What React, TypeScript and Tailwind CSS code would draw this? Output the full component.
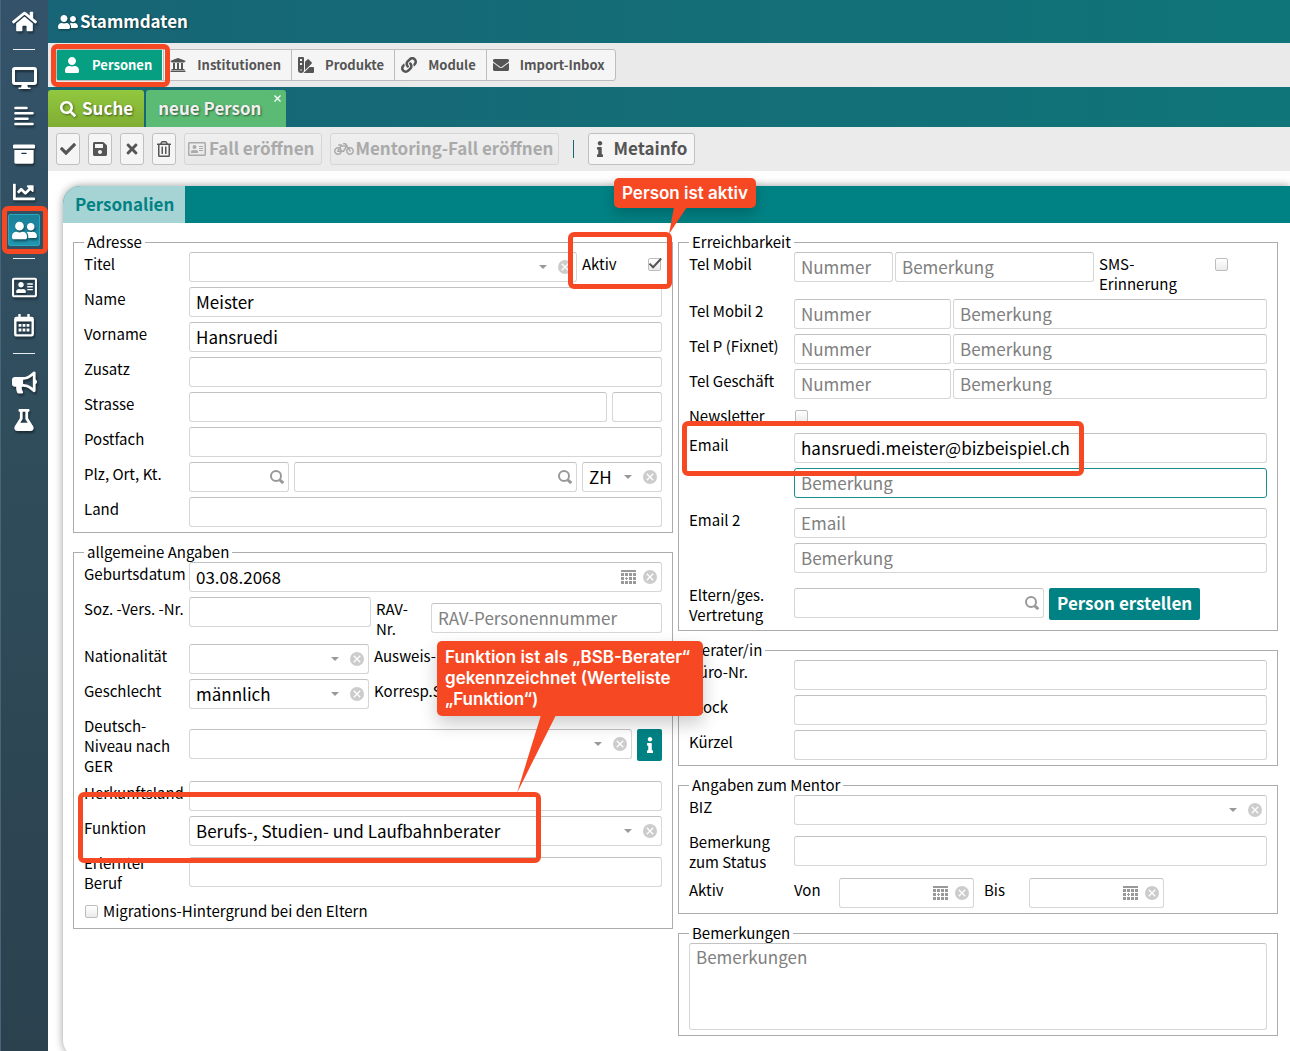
import { useId, type ReactNode } from "react";
import type { IconType } from "react-icons";
import {
  FaArchive,
  FaBicycle,
  FaBullhorn,
  FaChartLine,
  FaCheck,
  FaEnvelope,
  FaFlask,
  FaHome,
  FaInfo,
  FaLink,
  FaRegAddressCard,
  FaRegTrashAlt,
  FaSave,
  FaSearch,
  FaSwatchbook,
  FaTimes,
  FaUniversity,
  FaUser,
  FaUserFriends,
} from "react-icons/fa";

/* ---------- drawings ---------- */

function MonitorIcon() {
  return (
    <svg viewBox="0 0 25 23" className="h-[23px] w-[25px]" fill="none">
      <rect x="1.5" y="1.5" width="22" height="15" rx="1.5" stroke="currentColor" strokeWidth="3" />
      <path d="M10 17h5l1 3.5h2.5V22h-12v-1.5H9z" fill="currentColor" />
    </svg>
  );
}

function LinesIcon() {
  return (
    <svg viewBox="0 0 20 20" className="size-5" fill="none" stroke="currentColor" strokeWidth="2.6" strokeLinecap="round">
      <path d="M1.5 2h11M1.5 7.3h17M1.5 12.7h12M1.5 18h17" />
    </svg>
  );
}

function CalendarGridIcon() {
  return (
    <svg viewBox="0 0 20 23" className="h-[23px] w-5" fill="none">
      <rect x="1.3" y="4" width="17.4" height="17.4" rx="1.2" stroke="currentColor" strokeWidth="2.4" />
      <path d="M5.5 0.6v4M14.5 0.6v4" stroke="currentColor" strokeWidth="2.4" strokeLinecap="round" />
      <path d="M1 4h18v3.5H1z" fill="currentColor" />
      <path
        fill="currentColor"
        d="M4.6 10h2.8v2.8H4.6zM8.6 10h2.8v2.8H8.6zM12.6 10h2.8v2.8h-2.8zM4.6 14.6h2.8v2.8H4.6zM8.6 14.6h2.8v2.8H8.6zM12.6 14.6h2.8v2.8h-2.8z"
      />
    </svg>
  );
}

function DateIcon() {
  return (
    <svg viewBox="0 0 15 14" className="h-[14px] w-[15px]" fill="#999">
      <path d="M0 0h15v2H0zM0 3h3v3H0zM4 3h3v3H4zM8 3h3v3H8zM12 3h3v3h-3zM0 7h3v3H0zM4 8h1V7h1v1h1v1H6v1H5V9H4zM8 7h3v3H8zM12 7h3v3h-3zM0 11h3v3H0zM4 11h3v3H4zM8 11h3v3H8zM12 11h3v3h-3z" />
    </svg>
  );
}

function ClearIcon() {
  return (
    <svg viewBox="0 0 14 14" className="size-[14px]">
      <circle cx="7" cy="7" r="7" fill="#ccc" />
      <path d="M3.8 3.8l6.4 6.4M10.2 3.8l-6.4 6.4" stroke="#fff" strokeWidth="1.3" />
    </svg>
  );
}

function LensIcon() {
  return (
    <svg viewBox="0 0 14 14" className="size-[14px]" fill="none" stroke="#999">
      <circle cx="6" cy="6" r="5" strokeWidth="2" />
      <path d="M9.8 9.8l3.4 3.2" strokeWidth="3" />
    </svg>
  );
}

/* ---------- form parts ---------- */

const box =
  "h-[30px] min-w-0 rounded-[3px] border border-[#d6d6d6] border-t-[#c2c2c2] bg-white px-[6px] pb-px text-[17px] text-black outline-none placeholder:text-[#808080]";

function Field({
  label,
  value,
  placeholder,
  className = "flex-1",
  id,
  focused = false,
}: {
  label: string;
  value?: string;
  placeholder?: string;
  className?: string;
  id?: string;
  focused?: boolean;
}) {
  return (
    <input
      id={id}
      aria-label={id ? undefined : label}
      defaultValue={value}
      placeholder={placeholder}
      className={`${box} ${className} ${focused ? "border-[#1c8f8b]! border-t-[#1c8f8b]!" : ""}`}
    />
  );
}

function Clear() {
  return (
    <button type="button" aria-label="Leeren" className="pointer-events-auto flex">
      <ClearIcon />
    </button>
  );
}

function SelectField({
  label,
  value = "",
  className = "flex-1",
  id,
}: {
  label: string;
  value?: string;
  className?: string;
  id?: string;
}) {
  return (
    <div className={`relative flex min-w-0 ${className}`}>
      <select id={id} aria-label={id ? undefined : label} className={`${box} w-full appearance-none`}>
        <option>{value}</option>
      </select>
      <span className="pointer-events-none absolute inset-y-0 right-[5px] flex items-center gap-[11px]">
        <svg viewBox="0 0 8 4" className="h-1 w-2" fill="#999">
          <path d="M0 0h8L4 4z" />
        </svg>
        <Clear />
      </span>
    </div>
  );
}

function DateField({
  label,
  value,
  className = "flex-1",
  id,
}: {
  label: string;
  value?: string;
  className?: string;
  id?: string;
}) {
  return (
    <div className={`relative flex min-w-0 ${className}`}>
      <input id={id} aria-label={id ? undefined : label} defaultValue={value} className={`${box} w-full`} />
      <span className="pointer-events-none absolute inset-y-0 right-[5px] flex items-center gap-[7px]">
        <button type="button" aria-label="Kalender" className="pointer-events-auto flex">
          <DateIcon />
        </button>
        <Clear />
      </span>
    </div>
  );
}

function SearchField({ label, className = "flex-1", id }: { label: string; className?: string; id?: string }) {
  return (
    <div className={`relative flex min-w-0 ${className}`}>
      <input id={id} aria-label={id ? undefined : label} className={`${box} w-full`} />
      <span className="pointer-events-none absolute inset-y-0 right-[5px] flex items-center">
        <LensIcon />
      </span>
    </div>
  );
}

function Tick({ id, label, checked = false }: { id?: string; label?: string; checked?: boolean }) {
  return (
    <span className="relative flex size-[13px] shrink-0">
      <input
        id={id}
        type="checkbox"
        aria-label={label}
        defaultChecked={checked}
        className="peer size-[13px] appearance-none rounded-[2px] border border-[#bdbdbd] bg-gradient-to-b from-white to-[#ebebeb]"
      />
      <svg
        viewBox="0 0 14 13"
        className="pointer-events-none absolute top-0 left-0 hidden h-[13px] w-[14px] peer-checked:block"
        fill="none"
        stroke="#555"
        strokeWidth="2"
      >
        <path d="M1.5 5.6l3.6 3.6L13.2.5" />
      </svg>
    </span>
  );
}

function Row({
  label,
  align = "items-center",
  children,
  after,
}: {
  label: string;
  align?: string;
  children: (id: string) => ReactNode;
  after?: ReactNode;
}) {
  const id = useId();
  return (
    <div className={`relative flex pb-[5px] ${align}`}>
      <label htmlFor={id} className="w-[105px] shrink-0 self-start pt-[2px] pr-1 text-[15px] leading-5">
        {label}
      </label>
      <div className={`flex min-w-0 flex-1 ${align}`}>{children(id)}</div>
      {after}
    </div>
  );
}

function Group({ title, children }: { title: string; children: ReactNode }) {
  return (
    <fieldset className="min-w-0 border border-[#acacac] px-[10px]">
      <legend className="px-[3px] text-[15px] leading-5">{title}</legend>
      {children}
    </fieldset>
  );
}

/* ---------- annotations ---------- */

function Ring({ className }: { className: string }) {
  return (
    <span
      aria-hidden="true"
      className={`pointer-events-none absolute z-20 rounded-[6px] border-[5px] border-[#f64823] ${className}`}
    />
  );
}

/* ---------- navigation ---------- */

const navItems: { icon: IconType; text: string }[] = [
  { icon: FaUniversity, text: "Institutionen" },
  { icon: FaSwatchbook, text: "Produkte" },
  { icon: FaLink, text: "Module" },
  { icon: FaEnvelope, text: "Import-Inbox" },
];

function SideLink({ label, children }: { label: string; children: ReactNode }) {
  return (
    <a
      href="#"
      aria-label={label}
      className="flex h-[38px] w-full items-center justify-center text-white drop-shadow-[1px_2px_1px_rgba(0,0,0,0.45)]"
    >
      {children}
    </a>
  );
}

function SideRule() {
  return (
    <div className="flex h-[19px] w-full items-center justify-center">
      <span className="h-px w-[22px] bg-white/90" />
    </div>
  );
}

const tool =
  "flex h-8 items-center justify-center rounded-[3px] border border-[#c0c0c0] bg-[#f5f5f5] text-[#555]";
const toolDisabled =
  "flex h-8 items-center rounded-[3px] border border-[#d6d6d6] bg-gradient-to-b from-[#efefef] to-[#e8e8e8] text-[17px] font-bold text-[#aaa]";

export default function App() {
  return (
    <div className="flex h-screen overflow-hidden bg-white font-['Noto_Sans_CJK_SC','Noto_Sans',sans-serif] text-black">
      <nav className="flex w-12 shrink-0 flex-col items-center bg-gradient-to-b from-[#34536a] from-0% via-[#304d5c] via-40% to-[#2b414e] pt-[2px] shadow-[inset_1px_0_0_#47647a]">
        <SideLink label="Start">
          <FaHome className="size-[25px]" />
        </SideLink>
        <SideRule />
        <SideLink label="Arbeitsplatz">
          <MonitorIcon />
        </SideLink>
        <SideLink label="Listen">
          <LinesIcon />
        </SideLink>
        <SideLink label="Archiv">
          <FaArchive className="size-[22px]" />
        </SideLink>
        <SideLink label="Statistik">
          <FaChartLine className="size-[22px]" />
        </SideLink>
        <div className="relative flex h-[38px] w-full items-center justify-center">
          <a
            href="#"
            aria-label="Stammdaten"
            className="flex size-8 items-center justify-center rounded-[2px] border border-[#27a9c4] bg-gradient-to-b from-[#1b7f98] to-[#2196b0] text-white"
          >
            <FaUserFriends className="size-[25px] shrink-0 drop-shadow-[1px_2px_1px_rgba(0,0,0,0.45)]" />
          </a>
          <Ring className="-top-[5px] right-0 -bottom-[5px] left-[2px]" />
        </div>
        <SideRule />
        <SideLink label="Kontakte">
          <FaRegAddressCard className="size-[25px]" />
        </SideLink>
        <SideLink label="Kalender">
          <CalendarGridIcon />
        </SideLink>
        <SideRule />
        <SideLink label="Mitteilungen">
          <FaBullhorn className="size-[25px]" />
        </SideLink>
        <SideLink label="Labor">
          <FaFlask className="size-[22px]" />
        </SideLink>
      </nav>

      <main className="flex min-w-0 flex-1 flex-col">
        <header className="flex h-[43px] shrink-0 items-center gap-[2px] bg-gradient-to-r from-[#176576] to-[#0f7578] pl-[10px] text-white">
          <FaUserFriends className="size-5 drop-shadow-[1px_1px_1px_rgba(0,0,0,0.4)]" />
          <h1 className="pb-[2px] text-[17px] leading-6 font-bold [text-shadow:1px_1px_2px_rgba(0,0,0,0.5)]">
            Stammdaten
          </h1>
        </header>

        <div className="flex h-11 shrink-0 items-center bg-[#eaeaea] pl-2">
          <div className="flex h-8 rounded-[3px] border border-[#bdbdbd] bg-[#f5f5f5] text-[13px] font-bold text-[#555]">
            <div className="relative flex border-r border-[#bdbdbd] pr-px">
              <button type="button" className="flex items-center bg-[#069f81] pr-[10px] pl-[7px] text-white">
                <FaUser className="mr-3 size-4" />
                Personen
              </button>
              <Ring className="-top-[6px] -right-[7px] -bottom-[7px] -left-[6px]" />
            </div>
            {navItems.map(({ icon: Icon, text }) => (
              <button
                key={text}
                type="button"
                className="flex items-center border-r border-[#bdbdbd] pr-[10px] pl-[6px] last:border-r-0"
              >
                <Icon className="mr-[11px] size-4" />
                {text}
              </button>
            ))}
          </div>
        </div>

        <div className="flex h-10 shrink-0 items-end gap-[2px] bg-gradient-to-r from-[#176576] to-[#0f7578] text-[17px] font-bold text-white">
          <button
            type="button"
            className="flex h-[37px] items-center gap-[6px] rounded-t-[3px] bg-gradient-to-b from-[#92c83e] to-[#7fad33] pr-[11px] pl-3 [text-shadow:1px_1px_2px_rgba(0,0,0,0.5)]"
          >
            <FaSearch className="size-4 drop-shadow-[1px_1px_1px_rgba(0,0,0,0.4)]" />
            <span className="pb-[2px]">Suche</span>
          </button>
          <div className="relative flex h-[37px] rounded-t-[3px] bg-[#5bba74] text-[#f0f0f0]">
            <button type="button" className="pr-6 pb-[2px] pl-3 [text-shadow:1px_1px_2px_rgba(0,0,0,0.5)]">
              neue Person
            </button>
            <button type="button" aria-label="Tab schliessen" className="absolute top-[5px] right-[5px]">
              <svg viewBox="0 0 7 7" className="size-[7px]" stroke="#fff" strokeWidth="1.3">
                <path d="M.5.5l6 6M6.5.5l-6 6" />
              </svg>
            </button>
          </div>
        </div>

        <div className="flex h-11 shrink-0 items-center gap-2 bg-[#ebebeb] pl-2">
          <button type="button" aria-label="Übernehmen" className={`${tool} w-6`}>
            <FaCheck className="size-4" />
          </button>
          <button type="button" aria-label="Speichern" className={`${tool} w-6`}>
            <FaSave className="size-4" />
          </button>
          <button type="button" aria-label="Abbrechen" className={`${tool} w-6`}>
            <FaTimes className="size-4" />
          </button>
          <button type="button" aria-label="Löschen" className={`${tool} w-6`}>
            <FaRegTrashAlt className="size-4" />
          </button>
          <button type="button" disabled className={`${toolDisabled} gap-[3px] pr-[7px] pl-[3px]`}>
            <FaRegAddressCard className="size-[18px]" />
            <span className="pb-[2px]">Fall eröffnen</span>
          </button>
          <button type="button" disabled className={`${toolDisabled} gap-px pr-[5px] pl-[3px]`}>
            <FaBicycle className="size-5" />
            <span className="pb-[2px]">Mentoring-Fall eröffnen</span>
          </button>
          <span className="mx-[6px] h-[18px] w-px bg-[#176576]" />
          <button type="button" className={`${tool} gap-[5px] pr-[7px] pl-[3px] text-[17px] font-bold`}>
            <FaInfo className="size-4" />
            <span className="pb-[2px]">Metainfo</span>
          </button>
        </div>

        <section className="mt-[15px] ml-[15px] shrink-0 rounded-l-[18px] bg-white pb-[22px] shadow-[0_0_8px_rgba(0,0,0,0.4)]">
          <div className="flex h-[37px] rounded-tl-[18px] bg-[#008284]">
            <button
              type="button"
              className="rounded-tl-[18px] bg-[#a6d4d4] pr-[11px] pb-[2px] pl-3 text-[17px] font-bold text-[#008284]"
            >
              Personalien
            </button>
          </div>

          <form className="grid grid-cols-2 gap-[5px] pt-[9px] pr-3 pl-[10px]">
            <div className="flex min-w-0 flex-col gap-[9px]">
              <Group title="Adresse">
                <Row
                  label="Titel"
                  after={
                    <div className="relative ml-[5px] flex h-[30px] w-[80px] items-start justify-between">
                      <label htmlFor="aktiv" className="pt-[2px] text-[15px] leading-5">
                        Aktiv
                      </label>
                      <span className="pt-[6px] pr-px">
                        <Tick id="aktiv" checked />
                      </span>
                      <Ring className="-top-5 -right-[10px] -bottom-[7px] -left-[14px]" />
                      <div className="absolute bottom-full left-8 z-30 mb-11 rounded-[5px] bg-[#f64823] px-2 py-1 font-['Inter',sans-serif] text-[17px] leading-[22px] font-semibold whitespace-nowrap text-white shadow-[0_6px_14px_rgba(0,0,0,0.2)]">
                        Person ist aktiv
                        <svg viewBox="0 0 20 26" className="absolute top-full left-[54px] h-[26px] w-5" fill="#f64823">
                          <path d="M6 -1H19L1 26z" />
                        </svg>
                      </div>
                    </div>
                  }
                >
                  {(id) => <SelectField id={id} label="Titel" />}
                </Row>
                <Row label="Name">{(id) => <Field id={id} label="Name" value="Meister" />}</Row>
                <Row label="Vorname">{(id) => <Field id={id} label="Vorname" value="Hansruedi" />}</Row>
                <Row label="Zusatz">{(id) => <Field id={id} label="Zusatz" />}</Row>
                <Row label="Strasse">
                  {(id) => (
                    <>
                      <Field id={id} label="Strasse" />
                      <Field label="Hausnummer" className="ml-[5px] w-[50px]" />
                    </>
                  )}
                </Row>
                <Row label="Postfach">{(id) => <Field id={id} label="Postfach" />}</Row>
                <Row label="Plz, Ort, Kt.">
                  {(id) => (
                    <>
                      <SearchField id={id} label="Plz" className="w-[100px]" />
                      <SearchField label="Ort" className="mx-[5px] flex-1" />
                      <SelectField label="Kanton" value="ZH" className="w-[80px]" />
                    </>
                  )}
                </Row>
                <Row label="Land">{(id) => <Field id={id} label="Land" />}</Row>
              </Group>

              <Group title="allgemeine Angaben">
                <Row label="Geburtsdatum">
                  {(id) => <DateField id={id} label="Geburtsdatum" value="03.08.2068" />}
                </Row>
                <Row label="Soz. -Vers. -Nr." align="items-start">
                  {(id) => (
                    <>
                      <Field id={id} label="Soz. -Vers. -Nr." className="w-[182px]" />
                      <label htmlFor="rav" className="w-[60px] pt-[2px] pr-5 pl-[5px] text-[15px] leading-5">
                        RAV-Nr.
                      </label>
                      <Field id="rav" label="RAV-Nr." placeholder="RAV-Personennummer" className="mt-[6px] flex-1" />
                    </>
                  )}
                </Row>
                <Row
                  label="Nationalität"
                  align="items-start"
                  after={
                    <div className="absolute top-0 right-0 z-30 mt-[-3px] mr-[-41px] w-[266px] rounded-[5px] bg-[#f64823] px-2 py-[6px] font-['Inter',sans-serif] text-[17px] leading-[21px] font-semibold text-white shadow-[0_8px_18px_rgba(0,0,0,0.2)]">
                      Funktion ist als „BSB-Berater“
                      <br />
                      gekennzeichnet (Werteliste
                      <br />
                      „Funktion“)
                      <svg viewBox="0 0 40 77" className="absolute top-full left-20 h-[77px] w-10" fill="#f64823">
                        <path d="M24 -1H39L0 77z" />
                      </svg>
                    </div>
                  }
                >
                  {(id) => (
                    <>
                      <SelectField id={id} label="Nationalität" className="w-[180px]" />
                      <span className="pt-[2px] pl-[5px] text-[15px] leading-5">Ausweis-</span>
                    </>
                  )}
                </Row>
                <Row label="Geschlecht" align="items-start">
                  {(id) => (
                    <>
                      <SelectField id={id} label="Geschlecht" value="männlich" className="w-[180px]" />
                      <span className="pt-[2px] pl-[5px] text-[15px] leading-5">Korresp.S</span>
                    </>
                  )}
                </Row>
                <Row label="Deutsch-Niveau nach GER">
                  {(id) => (
                    <div className="flex flex-1 items-start gap-[5px]">
                      <SelectField id={id} label="Deutsch-Niveau nach GER" />
                      <button
                        type="button"
                        aria-label="Information"
                        className="flex h-8 w-[25px] items-center justify-center rounded-[2px] bg-[#008284] text-white"
                      >
                        <FaInfo className="size-4" />
                      </button>
                    </div>
                  )}
                </Row>
                <Row label="Herkunftsland">{(id) => <Field id={id} label="Herkunftsland" />}</Row>
                <Row label="Funktion" after={<Ring className="-top-6 right-[121px] -bottom-3 -left-[6px]" />}>
                  {(id) => (
                    <SelectField id={id} label="Funktion" value="Berufs-, Studien- und Laufbahnberater" />
                  )}
                </Row>
                <Row label="Erlernter Beruf">{(id) => <Field id={id} label="Erlernter Beruf" />}</Row>
                <div className="flex items-center gap-[5px] pt-[3px] pb-[7px] pl-px">
                  <Tick id="migration" />
                  <label htmlFor="migration" className="text-[15px] leading-5">
                    Migrations-Hintergrund bei den Eltern
                  </label>
                </div>
              </Group>
            </div>

            <div className="flex min-w-0 flex-col gap-[9px]">
              <Group title="Erreichbarkeit">
                <Row label="Tel Mobil" align="items-start">
                  {(id) => (
                    <>
                      <div className="flex min-w-0 flex-1 gap-[2px]">
                        <Field id={id} label="Nummer" placeholder="Nummer" className="w-[99px]" />
                        <Field label="Bemerkung" placeholder="Bemerkung" />
                      </div>
                      <label htmlFor="sms" className="ml-[5px] w-[116px] shrink-0 pt-[2px] pr-6 text-[15px] leading-5">
                        SMS-Erinnerung
                      </label>
                      <span className="mt-[6px] mr-[39px]">
                        <Tick id="sms" />
                      </span>
                    </>
                  )}
                </Row>
                {["Tel Mobil 2", "Tel P (Fixnet)", "Tel Geschäft"].map((label) => (
                  <Row key={label} label={label}>
                    {(id) => (
                      <div className="flex flex-1 gap-[2px]">
                        <Field id={id} label="Nummer" placeholder="Nummer" className="w-[157px]" />
                        <Field label="Bemerkung" placeholder="Bemerkung" />
                      </div>
                    )}
                  </Row>
                ))}
                <div className="flex h-[29px]">
                  <label htmlFor="newsletter" className="w-[105px] pt-[2px] text-[15px] leading-5">
                    Newsletter
                  </label>
                  <span className="pt-[6px] pl-px">
                    <Tick id="newsletter" />
                  </span>
                </div>
                <Row
                  label="Email"
                  align="items-start"
                  after={<Ring className="-top-3 right-[183px] bottom-8 -left-[7px]" />}
                >
                  {(id) => (
                    <div className="flex flex-1 flex-col gap-[5px] pb-[5px]">
                      <Field id={id} label="Email" value="hansruedi.meister@bizbeispiel.ch" className="w-full" />
                      <Field label="Bemerkung" placeholder="Bemerkung" className="w-full" focused />
                    </div>
                  )}
                </Row>
                <Row label="Email 2" align="items-start">
                  {(id) => (
                    <div className="flex flex-1 flex-col gap-[5px] pb-[5px]">
                      <Field id={id} label="Email 2" placeholder="Email" className="w-full" />
                      <Field label="Bemerkung" placeholder="Bemerkung" className="w-full" />
                    </div>
                  )}
                </Row>
                <Row label="Eltern/ges. Vertretung">
                  {(id) => (
                    <div className="flex flex-1 items-start gap-[5px]">
                      <SearchField id={id} label="Vertretung" className="w-[250px]" />
                      <button
                        type="button"
                        className="h-8 rounded-[2px] bg-[#008284] px-2 pb-[2px] text-[17px] font-bold text-white"
                      >
                        Person erstellen
                      </button>
                    </div>
                  )}
                </Row>
              </Group>

              <Group title="Berater/in">
                {["Büro-Nr.", "Stock", "Kürzel"].map((label) => (
                  <Row key={label} label={label}>
                    {(id) => <Field id={id} label={label} />}
                  </Row>
                ))}
              </Group>

              <Group title="Angaben zum Mentor">
                <Row label="BIZ">{(id) => <SelectField id={id} label="BIZ" />}</Row>
                <Row label="Bemerkung zum Status">{(id) => <Field id={id} label="Bemerkung zum Status" />}</Row>
                <div className="flex pt-px pb-[5px] text-[15px] leading-5">
                  <span className="w-[105px] pt-[2px]">Aktiv</span>
                  <label htmlFor="von" className="w-[45px] pt-[2px]">
                    Von
                  </label>
                  <DateField id="von" label="Von" className="w-[135px]" />
                  <label htmlFor="bis" className="ml-[10px] w-[45px] pt-[2px]">
                    Bis
                  </label>
                  <DateField id="bis" label="Bis" className="w-[135px]" />
                </div>
              </Group>

              <Group title="Bemerkungen">
                <textarea
                  aria-label="Bemerkungen"
                  placeholder="Bemerkungen"
                  className="mb-[5px] block h-[87px] w-full resize-none rounded-[3px] border border-[#d6d6d6] border-t-[#c2c2c2] px-[6px] pt-px text-[17px] leading-6 outline-none placeholder:text-[#808080]"
                />
              </Group>
            </div>
          </form>
        </section>
      </main>
    </div>
  );
}
